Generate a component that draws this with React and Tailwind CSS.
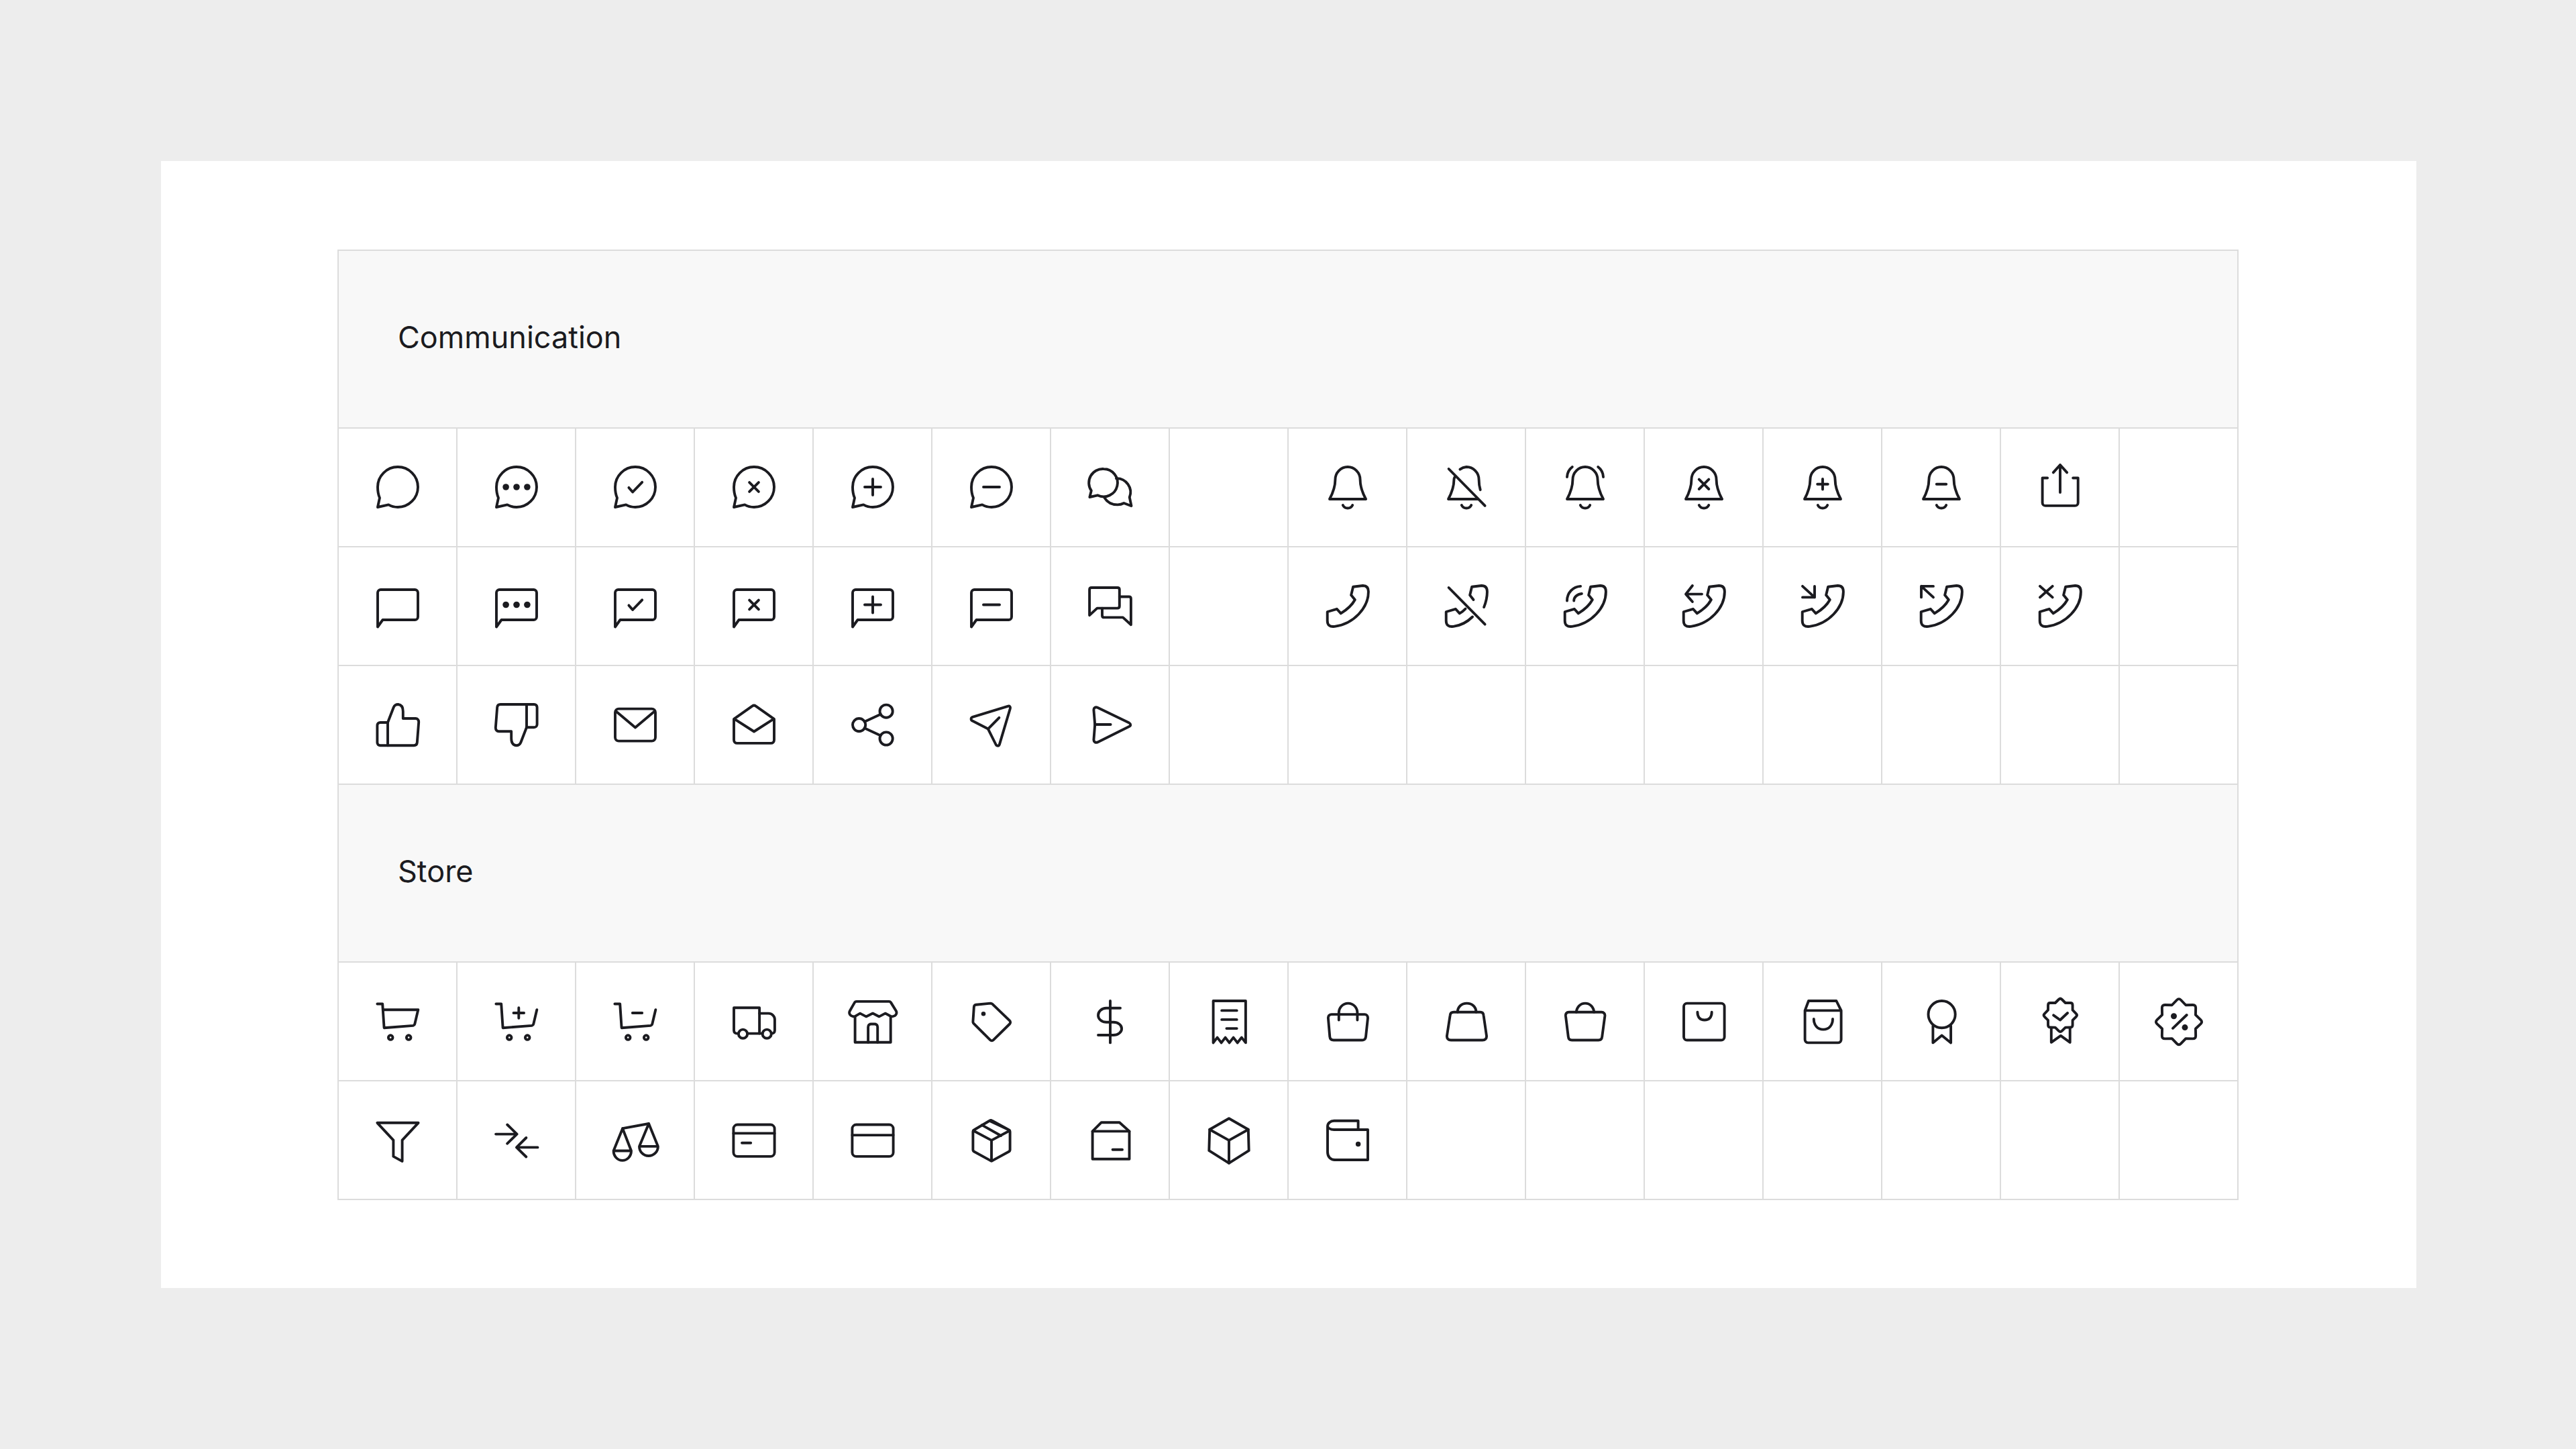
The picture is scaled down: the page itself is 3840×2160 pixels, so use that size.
const Icon = ({ children }) => (
  <svg
    width="72"
    height="72"
    viewBox="0 0 24 24"
    fill="none"
    stroke="#1b1b20"
    strokeWidth="1.3"
    strokeLinecap="round"
    strokeLinejoin="round"
    className="overflow-visible"
  >
    {children}
  </svg>
);

// wavy badge outline, 8 tips with softened ends
const starPath = (cx, cy, R, r) => {
  const pt = (rad, deg) => {
    const a = (deg - 90) * (Math.PI / 180);
    return [cx + rad * Math.cos(a), cy + rad * Math.sin(a)];
  };
  const mix = (a, b, t) => [a[0] + (b[0] - a[0]) * t, a[1] + (b[1] - a[1]) * t];
  const fmt = (p) => `${p[0].toFixed(2)} ${p[1].toFixed(2)}`;
  let d = '';
  for (let i = 0; i < 8; i++) {
    const deg = i * 45;
    const tip = pt(R, deg);
    const before = mix(tip, pt(r, deg - 22.5), 0.3);
    const valley = pt(r, deg + 22.5);
    const after = mix(tip, valley, 0.3);
    d += `${i === 0 ? 'M' : 'L'}${fmt(before)}Q${fmt(tip)} ${fmt(after)}L${fmt(valley)}`;
  }
  return d + 'Z';
};

const Dots = ({ y }) => (
  <g fill="#1b1b20" stroke="none">
    <circle cx="6.7" cy={y} r="1.6" />
    <circle cx="12" cy={y} r="1.6" />
    <circle cx="17.3" cy={y} r="1.6" />
  </g>
);
const Check = ({ dy = 0 }) => <path d={`M8.8 ${12.3 + dy}L10.7 ${14.5 + dy}L15.4 ${9.6 + dy}`} />;
const Cross = ({ y = 12, s = 2.5 }) => <path d={`M${12 - s} ${y - s}L${12 + s} ${y + s}M${12 + s} ${y - s}L${12 - s} ${y + s}`} />;
const Plus = ({ y = 12, s = 4, x = 12 }) => <path d={`M${x - s} ${y}H${x + s}M${x} ${y - s}V${y + s}`} />;
const Minus = ({ y = 12, s = 4, x = 12 }) => <path d={`M${x - s} ${y}H${x + s}`} />;

const ChatRound = ({ children }) => (
  <Icon>
    <path d="M12 2a10 10 0 1 1 0 20c-1.7 0-3.2-.4-4.6-1.2L2 22l1-4.6C2.4 16.1 2 14.1 2 12 2 6.5 6.5 2 12 2z" />
    {children}
  </Icon>
);
const ChatSquare = ({ children }) => (
  <Icon>
    <path d="M3.5 4h17A1.5 1.5 0 0 1 22 5.5v12a1.5 1.5 0 0 1-1.5 1.5H4.5L2 22.5V5.5A1.5 1.5 0 0 1 3.5 4z" />
    {children}
  </Icon>
);

const bellClapper = 'M9.6 21c.4.9 1.3 1.5 2.4 1.5s2-.6 2.4-1.5';
const Bell = ({ children }) => (
  <Icon>
    <path d="M3 18c1.7-3.2 2.8-6 2.8-9.6C5.8 4.8 8.6 2 12 2s6.2 2.8 6.2 6.4c0 3.6 1.1 6.4 2.8 9.6H3z" />
    <path d={bellClapper} />
    {children}
  </Icon>
);

const phoneBody =
  'M14.7 2.6L19.5 2C21.3 2 22.3 3 22.3 5 22.3 13 15 21 5.5 22.3 3 22.6 1.9 21.5 1.9 19.5L1.9 15 6.6 13.6 8.6 15.8C11.5 14 14 12 15.6 9L13.7 6.7Z';
const Phone = ({ children }) => (
  <Icon>
    <path d={phoneBody} />
    {children}
  </Icon>
);

const Cart = ({ children, full }) => (
  <Icon>
    <path d={`M1.8 3.5H4.4L5.2 15.4 19.6 14.3C20 14.2 20.3 14 20.4 13.6L22.1 6.4${full ? 'H4.6' : ''}`} />
    <circle cx="8.4" cy="20.2" r="1.1" />
    <circle cx="17.4" cy="20.2" r="1.1" />
    {children}
  </Icon>
);

const rowsCommunication = [
  [
    <ChatRound />,
    <ChatRound><Dots y={12} /></ChatRound>,
    <ChatRound><Check /></ChatRound>,
    <ChatRound><Cross s={2.3} /></ChatRound>,
    <ChatRound><Plus /></ChatRound>,
    <ChatRound><Minus /></ChatRound>,
    <Icon>
      <path d="M8.7 3a6.9 6.9 0 1 1-3 13.1L1.8 17l.8-3.2A6.9 6.9 0 0 1 8.7 3z" />
      <path d="M15 7.7a6.9 6.9 0 0 1 6.6 9.4l.9 4.3-3.7-1.4a6.9 6.9 0 0 1-3.1.8c-2.8 0-5.2-1.3-6.5-3.4" />
    </Icon>,
    null,
    <Bell />,
    <Icon>
      <path d="M8.8 3.2A6.2 6.2 0 0 1 12 2c3.4 0 6.2 2.8 6.2 6.4 0 1.8.2 3.4.7 5" />
      <path d="M6.1 7.2c-.2.4-.3.8-.3 1.2C5.8 12 4.7 14.8 3 18h14.6" />
      <path d={bellClapper} />
      <path d="M3.2 3L21.2 21.3" />
    </Icon>,
    <Bell>
      <path d="M3 7c.1-2 .9-3.7 2.6-5M21 7c-.1-2-.9-3.7-2.6-5" />
    </Bell>,
    <Bell><Cross y={10.6} s={2.4} /></Bell>,
    <Bell><Plus y={10.6} s={2.6} /></Bell>,
    <Bell><Minus y={10.6} s={2.4} /></Bell>,
    <Icon>
      <path d="M12 14.7V1M8.6 4.8L12 1l3.4 3.8" />
      <path d="M5.7 7.5H3.2V19.8C3.2 20.7 3.9 21.3 4.7 21.3H19.4C20.2 21.3 20.9 20.7 20.9 19.8V7.5H18.4" />
    </Icon>,
    null,
  ],
  [
    <ChatSquare />,
    <ChatSquare><Dots y={11.5} /></ChatSquare>,
    <ChatSquare><Check dy={-0.5} /></ChatSquare>,
    <ChatSquare><Cross y={11.5} s={2.3} /></ChatSquare>,
    <ChatSquare><Plus y={11.5} /></ChatSquare>,
    <ChatSquare><Minus y={11.5} /></ChatSquare>,
    <Icon>
      <path d="M2.7 3H15.6C16.2 3 16.6 3.4 16.6 4V12.2C16.6 12.8 16.2 13.2 15.6 13.2H5.5L1.7 16.7V4C1.7 3.4 2.1 3 2.7 3z" />
      <path d="M16.6 7.5H21.3C21.9 7.5 22.3 7.9 22.3 8.5V21.4L18.3 17.8H9C8.4 17.8 8 17.4 8 16.8V13.2" />
    </Icon>,
    null,
    <Phone />,
    <Icon>
      <path d="M15.5 9L13.7 6.7 14.7 2.6 19.5 2C21.3 2 22.3 3 22.3 5 22.3 7.6 21.7 10.2 20.7 12.7" />
      <path d="M11.5 13.5C10.6 14.5 9.6 15.2 8.6 15.8L6.6 13.6 1.9 15V19.5C1.9 21.5 3 22.6 5.5 22.3 9.2 21.8 12.5 20 15 17.5" />
      <path d="M3.2 3L21.2 21.2" />
    </Icon>,
    <Phone>
      <path d="M3 9.5C3 5.5 6 2.5 9.7 2.3M6.4 9.5C6.4 7.7 8 6.2 10.3 6" />
    </Phone>,
    <Phone>
      <path d="M3 6.2H11M6.3 2L3 6.2 6.3 10" />
    </Phone>,
    <Phone>
      <path d="M2 2.3L8 7.8M8 2.3V7.8H2" />
    </Phone>,
    <Phone>
      <path d="M8 7.8L2 2.3M8 2.3H2V7.8" />
    </Phone>,
    <Phone>
      <path d="M2 2.3L8.2 7.8M8.2 2.3L2 7.8" />
    </Phone>,
    null,
  ],
  [
    <Icon>
      <path d="M3.3 11H7L9.9 3.5C10.3 2.5 11.2 2 12.2 2 13.8 2.2 14.6 3.5 14.6 5.5V9H20.8C21.8 9 22.4 9.8 22.4 10.8L21.6 21C21.5 22 21 22.4 20 22.4H3.3C2.4 22.4 1.8 21.8 1.8 21V12.5C1.8 11.6 2.4 11 3.3 11Z" />
      <path d="M7 11V22.4" />
    </Icon>,
    <Icon>
      <g transform="rotate(180 12 12.2)">
        <path d="M3.3 11H7L9.9 3.5C10.3 2.5 11.2 2 12.2 2 13.8 2.2 14.6 3.5 14.6 5.5V9H20.8C21.8 9 22.4 9.8 22.4 10.8L21.6 21C21.5 22 21 22.4 20 22.4H3.3C2.4 22.4 1.8 21.8 1.8 21V12.5C1.8 11.6 2.4 11 3.3 11Z" />
        <path d="M7 11V22.4" />
      </g>
    </Icon>,
    <Icon>
      <rect x="2" y="4.2" width="20" height="16" rx="1.8" />
      <path d="M2.5 5.5L12 13.5 21.5 5.5" />
    </Icon>,
    <Icon>
      <path d="M2 9.3V19.7C2 20.6 2.7 21.3 3.6 21.3H20.4C21.3 21.3 22 20.6 22 19.7V9.3L12.8 2.8A1.3 1.3 0 0 0 11.2 2.8L2 9.3Z" />
      <path d="M2.3 9.3L12 15.5 21.7 9.3" />
    </Icon>,
    <Icon>
      <circle cx="5.2" cy="12.2" r="3.2" />
      <circle cx="18.7" cy="5.4" r="3.2" />
      <circle cx="18.7" cy="19" r="3.2" />
      <path d="M8 10.6L15.9 6.9M8 13.8L15.9 17.5" />
    </Icon>,
    <Icon>
      <path d="M2.6 8.3L20.3 2.9C21 2.7 21.5 3.3 21.3 4L16 21.8C15.7 22.8 14.7 22.9 14.2 22L10.3 14.2 2.5 10.2C1.6 9.7 1.7 8.6 2.6 8.3Z" />
      <path d="M10.3 14.2L15.8 8.6" />
    </Icon>,
    <Icon>
      <path d="M5.7 3.6L21.4 11.2C22.3 11.7 22.3 12.6 21.4 13L5.7 20.8C4.7 21.2 3.8 20.6 3.8 19.7L4.4 12 3.8 4.7C3.8 3.7 4.7 3.1 5.7 3.6Z" />
      <path d="M4.4 12H12.2" />
    </Icon>,
    null, null, null, null, null, null, null, null, null,
  ],
];

const rowsStore = [
  [
    <Cart full />,
    <Cart><Plus x={13.1} y={8} s={2.6} /></Cart>,
    <Cart><Minus x={13} y={8} s={2.4} /></Cart>,
    <Icon>
      <path d="M4.3 18.2H3.5C2.6 18.2 2 17.6 2 16.7V5.4H14.7V18.2H8.7" />
      <path d="M14.7 8.2H19.2C20.9 8.2 22.3 9.6 22.3 11.2V16.7C22.3 17.6 21.7 18.2 20.8 18.2H20.6" />
      <path d="M14.7 18.2H16.2" />
      <circle cx="6.5" cy="18.4" r="2.2" />
      <circle cx="18.4" cy="18.4" r="2.2" />
    </Icon>,
    <Icon>
      <path d="M3.9 2.3H20.1C20.5 2.3 20.8 2.5 21 2.8L23.6 7C24.1 7.9 23.7 9 22.9 9.4 22.4 9.7 21.9 9.8 21.3 9.8L18.2 8.2 15.2 9.8 12 8.2 8.7 9.8 5.7 8.2 3 9.8C2.4 9.8 1.8 9.7 1.3 9.4 .5 8.9 .1 7.9 .6 7L3 2.8C3.2 2.5 3.5 2.3 3.9 2.3Z" />
      <path d="M3.2 9.8V22.6H20.9V9.8" />
      <path d="M9.7 22.6V15C9.7 14.1 10.3 13.5 11.2 13.5H12.9C13.8 13.5 14.4 14.1 14.4 15V22.6" />
    </Icon>,
    <Icon>
      <path d="M4.3 3.9L11.5 3.2C11.9 3.2 12.2 3.3 12.5 3.6L21 11.8C21.5 12.3 21.5 13 21 13.5L13 21.4C12.5 21.9 11.8 21.9 11.3 21.4L3.2 13.3C2.9 13 2.8 12.7 2.8 12.3L3.3 4.9C3.4 4.3 3.7 4 4.3 3.9Z" />
      <circle cx="8" cy="8.4" r="0.45" fill="#1b1b20" />
    </Icon>,
    <Icon>
      <path d="M12 2V22.8" />
      <path d="M17 5.6H10C7.8 5.6 6 7.2 6 9.2 6 11.1 7.8 12.6 10 12.6H13.6C15.8 12.6 17.7 14 17.7 15.8 17.7 17.6 15.8 19 13.6 19H6" />
    </Icon>,
    <Icon>
      <path d="M4.2 2H20.3V22.8L18.3 20.2 16.2 22.8 14.2 20.2 12.2 22.8 10.2 20.2 8.2 22.8 6.2 20.2 4.2 22.8Z" />
      <path d="M8.4 6.8H15.9M8.4 11.3H15.9M10.8 15.7H15.9" />
    </Icon>,
    <Icon>
      <path d="M4 8.7H20.4C21.4 8.7 22 9.5 22 10.5L21 19.8C20.9 20.9 20.2 21.5 19.1 21.5H5C3.9 21.5 3.2 20.9 3.1 19.8L2.3 10.5C2.2 9.5 3 8.7 4 8.7Z" />
      <path d="M7.6 11.5V8C7.6 5.3 9.6 3.2 12.2 3.2S16.8 5.3 16.8 8V11.5" />
    </Icon>,
    <Icon>
      <path d="M5.7 7.6H18.9C19.8 7.6 20.4 8.2 20.5 9.1L22 19.4C22.1 20.7 21.3 21.5 20 21.5H4.3C3 21.5 2.2 20.7 2.3 19.4L3.9 9.1C4 8.2 4.7 7.6 5.7 7.6Z" />
      <path d="M7.6 7.6C7.6 5 9.6 3.2 12.2 3.2S16.8 5 16.8 7.6" />
    </Icon>,
    <Icon>
      <path d="M3.9 7.6H20.1C21.2 7.6 21.9 8.4 21.8 9.4L20.4 19.8C20.3 20.9 19.6 21.5 18.6 21.5H5.4C4.4 21.5 3.7 20.9 3.6 19.8L2.3 9.4C2.2 8.4 2.8 7.6 3.9 7.6Z" />
      <path d="M7.6 7.6C7.8 5 9.6 3.2 12 3.2S16.2 5 16.4 7.6" />
    </Icon>,
    <Icon>
      <rect x="2" y="3.2" width="20.2" height="18.3" rx="1.6" />
      <path d="M8.8 7.6C8.8 10 10 11.5 12.3 11.5 14.7 11.5 15.9 10 15.9 7.6" />
    </Icon>,
    <Icon>
      <path d="M3.2 6.8L5 2H18.8L21.2 6.8V21.2C21.2 22.1 20.6 22.8 19.7 22.8H4.7C3.8 22.8 3.2 22.1 3.2 21.2V6.8H21.2" />
      <path d="M7.6 11C7.6 14 9.4 16.2 12.3 16.2 15.2 16.2 17 14 17 11" />
    </Icon>,
    <Icon>
      <circle cx="12.2" cy="8.7" r="6.7" />
      <path d="M7.8 14.4V22.8L12.2 19.2 16.7 22.8V14.4" />
    </Icon>,
    <Icon>
      <path d={starPath(12.1, 9.1, 8.6, 6.6)} />
      <path d="M7.6 15.4V22.6L12.3 19.3 16.9 22.6V15.4" />
      <path d="M8.7 9.1L12 11.5 15.7 8" />
    </Icon>,
    <Icon>
      <path d={starPath(12, 12.4, 11.9, 9)} />
      <path d="M9 15.6L15.9 9" />
      <circle cx="9.5" cy="9.6" r="1.5" fill="#1b1b20" stroke="none" />
      <circle cx="15" cy="15.2" r="1.5" fill="#1b1b20" stroke="none" />
    </Icon>,
  ],
  [
    <Icon>
      <path d="M1.8 3.6H22.2L14.2 12.2V22.7L9.8 20.3V12.2L1.8 3.6Z" />
    </Icon>,
    <Icon>
      <path d="M1.7 9.2H12.2M7.4 4.5L12.2 9.2 7.4 13.9" />
      <path d="M22.5 15.8H12M16.8 11L12 15.8 16.8 20.5" />
    </Icon>,
    <Icon>
      <path d="M5.7 6.4L18.7 4" />
      <path d="M1.2 17.5L5.7 6.4 10 17.5H1.2C1.2 20.2 3.2 22.3 5.6 22.3S10 20.2 10 17.5" />
      <path d="M14 15.3L18.7 4 23.3 15.3H14C14 17.9 16 20 18.6 20S23.3 17.9 23.3 15.3" />
    </Icon>,
    <Icon>
      <rect x="1.8" y="4.5" width="20.4" height="15.8" rx="2" />
      <path d="M1.8 8.8H22.2M6 13.6H10.4" />
    </Icon>,
    <Icon>
      <rect x="1.8" y="4.5" width="20.4" height="15.8" rx="2" />
      <path d="M1.8 9.7H22.2" />
    </Icon>,
    <Icon>
      <path d="M11 2.6L20.6 7.1C21 7.3 21.2 7.7 21.2 8.1V16.9C21.2 17.3 21 17.7 20.6 17.9L12.6 22.3C12.2 22.6 11.8 22.6 11.4 22.3L3.4 17.9C3 17.7 2.8 17.3 2.8 16.9V8.1C2.8 7.7 3 7.3 3.4 7.1L11 2.6C11.4 2.3 11.9 2.3 12.4 2.6L20.6 7.1" />
      <path d="M3 7.5L12 12.3 21 7.5M12 12.3V22.5M7.3 4.7L16.7 10" />
    </Icon>,
    <Icon>
      <path d="M3.2 7.8H21.5V21.6H3.2Z" />
      <path d="M3.2 7.8L7.6 3.4H16.6L21.5 7.8" />
      <path d="M13.2 16.9H18" />
    </Icon>,
    <Icon>
      <path d="M12 1.4L21.6 6.9 21.9 17.4 12 23.6 2.1 17.4 2.4 6.9Z" />
      <path d="M2.4 6.9L12 12.3 21.6 6.9M12 12.3V23.6" />
    </Icon>,
    <Icon>
      <path d="M17.2 7V2.6H5.2C3.4 2.6 2 3.8 2 5.4V18.2C2 20.5 3.5 22 5.6 22H22V7H5.2C3.4 7 2.2 6.2 2 5.2" />
      <circle cx="17.2" cy="14.2" r="0.6" fill="#1b1b20" />
    </Icon>,
    null, null, null, null, null, null, null,
  ],
];

const Cell = ({ children }) => (
  <div className="h-[177px] flex items-center justify-center border-r-2 border-b-2 border-[#dcdcdc] pb-[2px]">
    {children}
  </div>
);

const Section = ({ title, rows }) => (
  <>
    <div className="col-span-full h-[265px] flex items-center pl-[88px] pb-[6px] bg-[#f8f8f8] border-r-2 border-b-2 border-[#dcdcdc] text-[45px] text-[#1b1b20]">
      {title}
    </div>
    {rows.flat().map((icon, i) => (
      <Cell key={i}>{icon}</Cell>
    ))}
  </>
);

export default function App() {
  return (
    <div className="min-h-screen bg-[#ededed] pt-[240px] pl-[240px] pr-[238px]">
      <div className="h-[1680px] bg-white pt-[132px] pl-[263px] font-['Inter',sans-serif]">
        <div className="grid grid-cols-[repeat(16,177px)] w-fit border-l-2 border-t-2 border-[#dcdcdc]">
          <Section title="Communication" rows={rowsCommunication} />
          <Section title="Store" rows={rowsStore} />
        </div>
      </div>
    </div>
  );
}
